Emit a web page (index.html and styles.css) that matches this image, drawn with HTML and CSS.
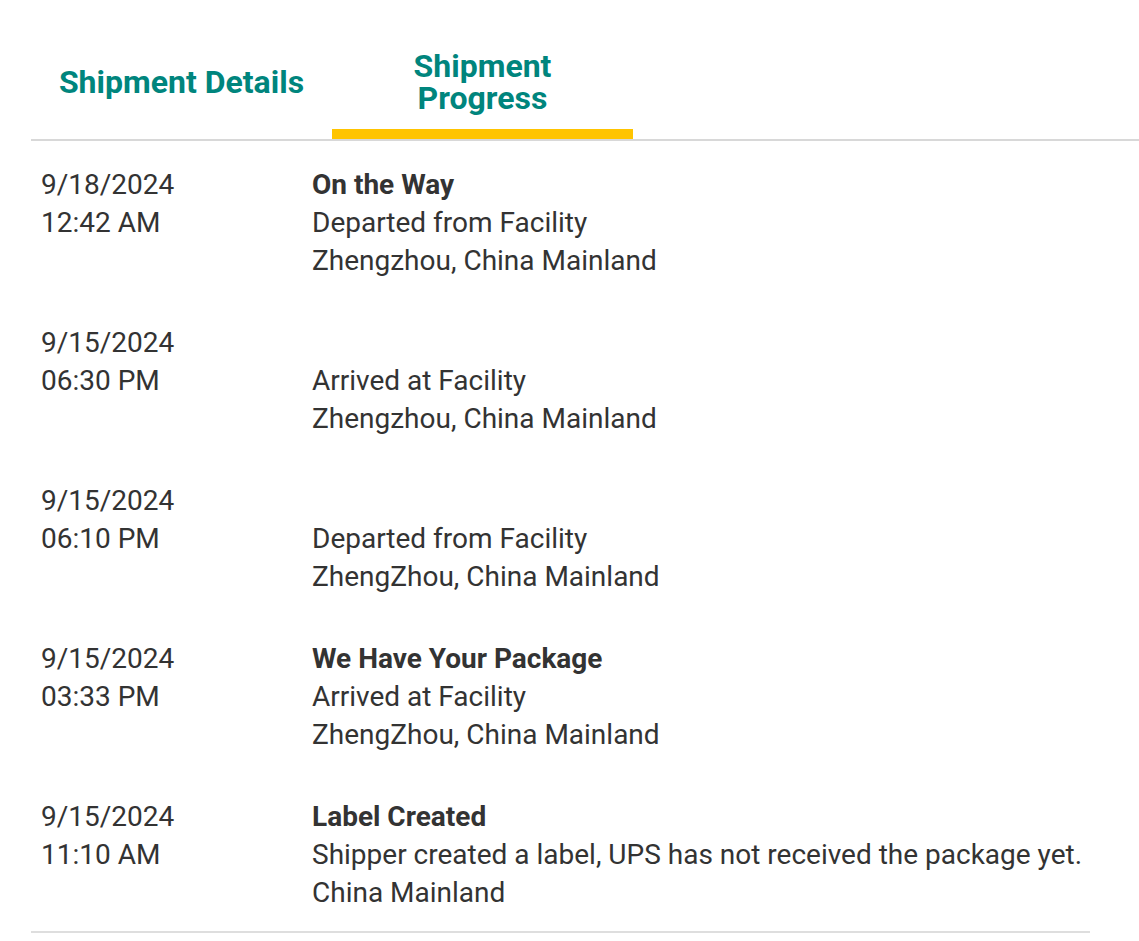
FILE: index.html
```html
<!DOCTYPE html>
<html lang="en">
<head>
    <meta charset="UTF-8">
    <title>Shipment Progress</title>
    <link rel="stylesheet" href="styles.css">
</head>
<body>
    <div class="tracking">
        <div class="tabs">
            <div class="tab">Shipment Details</div>
            <div class="tab active">Shipment<br>Progress</div>
        </div>

        <div class="progress">
            <div class="event">
                <div class="when">9/18/2024<br>12:42 AM</div>
                <div class="what">
                    <div class="status">On the Way</div>
                    <div>Departed from Facility</div>
                    <div>Zhengzhou, China Mainland</div>
                </div>
            </div>
            <div class="event">
                <div class="when">9/15/2024<br>06:30 PM</div>
                <div class="what">
                    <div class="status"></div>
                    <div>Arrived at Facility</div>
                    <div>Zhengzhou, China Mainland</div>
                </div>
            </div>
            <div class="event">
                <div class="when">9/15/2024<br>06:10 PM</div>
                <div class="what">
                    <div class="status"></div>
                    <div>Departed from Facility</div>
                    <div>ZhengZhou, China Mainland</div>
                </div>
            </div>
            <div class="event">
                <div class="when">9/15/2024<br>03:33 PM</div>
                <div class="what">
                    <div class="status">We Have Your Package</div>
                    <div>Arrived at Facility</div>
                    <div>ZhengZhou, China Mainland</div>
                </div>
            </div>
            <div class="event">
                <div class="when">9/15/2024<br>11:10 AM</div>
                <div class="what">
                    <div class="status">Label Created</div>
                    <div>Shipper created a label, UPS has not received the package yet.</div>
                    <div>China Mainland</div>
                </div>
            </div>
        </div>
    </div>
</body>
</html>
```

FILE: styles.css
```css
body {
    margin: 0;
    font-family: Roboto, "Liberation Sans", sans-serif;
    background: #fff;
    color: #333;
}
.tracking {
    padding: 50px 0 0 31px;
}
.tabs {
    display: flex;
    border-bottom: 2px solid #d8d8d8;
}
.tab {
    width: 301px;
    height: 89px;
    padding-bottom: 25px;
    display: flex;
    align-items: center;
    justify-content: center;
    text-align: center;
    color: #00857d;
    font-size: 32px;
    font-weight: 700;
    line-height: 32px;
    box-sizing: border-box;
}
.tab.active {
    padding-bottom: 15px;
    border-bottom: 10px solid #ffc400;
    margin-bottom: -1px;
}
.progress {
    width: 1059px;
    padding: 25px 0 19px;
    border-bottom: 2px solid #dedede;
}
.event {
    display: flex;
    font-size: 28px;
    line-height: 38px;
    padding-left: 10px;
}
.event + .event {
    margin-top: 44px;
}
.when {
    width: 271px;
}
.status {
    font-weight: 700;
    min-height: 38px;
}
```
